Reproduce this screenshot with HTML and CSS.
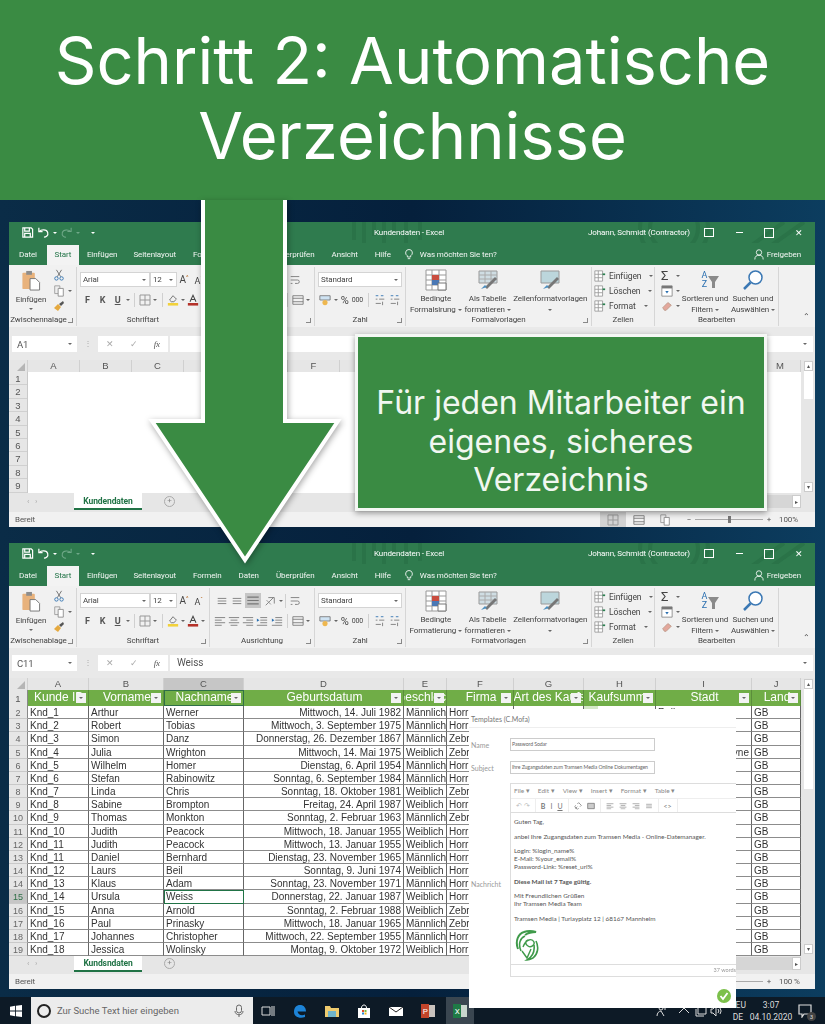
FILE: index.html
```html
<!DOCTYPE html>
<html lang="de">
<head>
  <meta charset="UTF-8" />
  <title>Schritt 2: Automatische Verzeichnisse</title>
  <link rel="stylesheet" href="styles.css">
</head>
<body>

  <svg class="defs" width="0" height="0">
    <symbol id="i-save" viewBox="0 0 14 14"><path d="M2 2h9l1.500 1.500V12H2zM4 2v3.500h5V2M4 12V8h6v4" fill="none" stroke="#fff" stroke-width="1.300"/></symbol>
    <symbol id="i-undo" viewBox="0 0 14 14"><path d="M2 2v4h4M2.500 6c2-2.500 8-2.500 9 1s-2 5-4 5" fill="none" stroke="#fff" stroke-width="1.300"/></symbol>
    <symbol id="i-redo" viewBox="0 0 14 14"><path d="M12 2v4H8M11.500 6c-2-2.500-8-2.500-9 1s2 5 4 5" fill="none" stroke="#6fa888" stroke-width="1.100"/></symbol>
    <symbol id="i-paste" viewBox="0 0 20 22"><rect x="1" y="3" width="13" height="17" rx="1" fill="#e8b27c"/><rect x="5" y="1" width="6" height="4" fill="#8d8d8d"/><path d="M9 9h6l4 4v8H9z" fill="#fff" stroke="#777"/></symbol>
    <symbol id="i-cut" viewBox="0 0 12 14"><path d="M3 1l5 8M9 1L4 9" stroke="#666" fill="none"/><circle cx="3" cy="11" r="2" fill="none" stroke="#2a6fb0"/><circle cx="9" cy="11" r="2" fill="none" stroke="#2a6fb0"/></symbol>
    <symbol id="i-copy" viewBox="0 0 12 14"><path d="M1 1h6v9H1z" fill="#eee" stroke="#999"/><path d="M5 4h6v9H5z" fill="#fff" stroke="#888"/></symbol>
    <symbol id="i-brush" viewBox="0 0 12 12"><path d="M6 4l4-3 1 2-3 3z" fill="#555"/><path d="M1 8l4-4 3 3-3 4z" fill="#e5a93f"/></symbol>
    <symbol id="i-border" viewBox="0 0 12 12"><path d="M1 1h10v10H1zM6 1v10M1 6h10" fill="none" stroke="#999"/></symbol>
    <symbol id="i-fill" viewBox="0 0 14 14"><path d="M7 2l4 4-3 3H5L3 7z" fill="none" stroke="#666"/><rect x="1" y="10.500" width="12" height="3" fill="#f2d13b"/></symbol>
    <symbol id="i-color" viewBox="0 0 14 14"><path d="M3.500 9L7 1.500 10.500 9M5 6.500h4" fill="none" stroke="#444" stroke-width="1.200"/><rect x="1" y="10.500" width="12" height="3" fill="#b5322a"/></symbol>
    <symbol id="i-lines" viewBox="0 0 14 12"><path d="M2 3h10M2 6h10M2 9h10" stroke="#777" fill="none"/></symbol>
    <symbol id="i-lines-left" viewBox="0 0 14 12"><path d="M1 2h12M1 5h8M1 8h12M1 11h8" stroke="#777" fill="none"/></symbol>
    <symbol id="i-lines-mid" viewBox="0 0 14 12"><path d="M1 2h12M3 5h8M1 8h12M3 11h8" stroke="#777" fill="none"/></symbol>
    <symbol id="i-lines-right" viewBox="0 0 14 12"><path d="M1 2h12M5 5h8M1 8h12M5 11h8" stroke="#777" fill="none"/></symbol>
    <symbol id="i-indent" viewBox="0 0 14 12"><path d="M5 2h8M5 5h8M5 8h8M1 11h12" stroke="#777" fill="none"/><path d="M1 3l3 2-3 2z" fill="#2a6fb0"/></symbol>
    <symbol id="i-orient" viewBox="0 0 14 14"><path d="M2 12L11 3M5 3h7v7" stroke="#777" fill="none"/><path d="M3 6l5 5" stroke="#888"/></symbol>
    <symbol id="i-wrap" viewBox="0 0 14 14"><path d="M2 3h10M2 7h8a2 2 0 010 4H7M2 11h2" stroke="#777" fill="none"/></symbol>
    <symbol id="i-merge" viewBox="0 0 14 12"><path d="M1 1h12v10H1zM1 4h12M1 8h12" stroke="#777" fill="none"/></symbol>
    <symbol id="i-money" viewBox="0 0 14 14"><path d="M1 2h12v5H1z" fill="#cfe3f3" stroke="#777"/><circle cx="7" cy="10" r="3" fill="#eeb74f"/></symbol>
    <symbol id="i-dec" viewBox="0 0 14 12"><path d="M2 5h2M6 5h6M2 10h6M10 8v4" stroke="#777" fill="none"/><path d="M2 1h3M8 1h3" stroke="#2a6fb0"/></symbol>
    <symbol id="i-cond" viewBox="0 0 22 22"><path d="M1 1h20v20H1zM1 6h20M1 11h20M1 16h20M7 1v20M14 1v20" fill="#fff" stroke="#999"/><path d="M7 6h7v5H7z" fill="#c94d3f"/><path d="M7 11h7v5H7z" fill="#4a78b5"/><path d="M13 14h8v7h-8z" fill="#fff" stroke="#777"/></symbol>
    <symbol id="i-table" viewBox="0 0 22 22"><path d="M2 2h18v12H2z" fill="#cfdde3" stroke="#999"/><path d="M2 6h18M2 10h18M8 2v12M14 2v12" stroke="#aaa"/><path d="M8 18l10-10 2 2-10 10z" fill="#777"/><path d="M4 20l4-4 2 2z" fill="#4c8fc0"/></symbol>
    <symbol id="i-styles" viewBox="0 0 22 22"><path d="M2 2h18v12H2z" fill="#bcd6dc" stroke="#999"/><path d="M8 18l10-10 2 2-10 10z" fill="#777"/><path d="M4 20l4-4 2 2z" fill="#4c8fc0"/></symbol>
    <symbol id="i-cells" viewBox="0 0 14 14"><path d="M1 1h9v12H1zM1 5h9M1 9h9M5 1v12" fill="#fff" stroke="#999"/><path d="M10 5h3" stroke="#2a7f4f" stroke-width="2"/></symbol>
    <symbol id="i-filld" viewBox="0 0 14 14"><path d="M1 1h12v12H1z" fill="#fff" stroke="#888"/><path d="M1 1h12v3H1z" fill="#777"/><path d="M5 7l2 3 2-3z" fill="#2a6fb0"/></symbol>
    <symbol id="i-erase" viewBox="0 0 14 14"><path d="M2 9l6-6 4 3-6 6H4z" fill="#e3a79c" stroke="#b98"/></symbol>
    <symbol id="i-sort" viewBox="0 0 22 22"><path d="M10 7h11l-4 6v6h-3v-6z" fill="#8a8a8a"/></symbol>
    <symbol id="i-search" viewBox="0 0 22 22"><circle cx="13.500" cy="8.500" r="6.500" fill="#fff" stroke="#3b78b4" stroke-width="1.500"/><path d="M8.500 13.500L2 20" stroke="#3b78b4" stroke-width="2.500"/></symbol>
    <symbol id="i-bulb" viewBox="0 0 12 14"><path d="M6 1a4 4 0 00-2 7.500V10h4V8.500A4 4 0 006 1zM4.500 12h3" fill="none" stroke="#fff"/></symbol>
    <symbol id="i-person" viewBox="0 0 12 14"><circle cx="6" cy="4.500" r="3.200" fill="none" stroke="#fff"/><path d="M1 13c0-4 2-5 5-5s5 1 5 5" fill="none" stroke="#fff"/></symbol>
    <symbol id="i-art" viewBox="0 0 470 43"><g fill="none" stroke="#2a7348" stroke-width="4"><path d="M10 0v18M20 0v26M30 0v14M40 0v22M50 0v12M62 0v30M76 0v18"/><circle cx="330" cy="6" r="34"/><circle cx="330" cy="6" r="24"/><path d="M380 43L440 0M400 43L460 0"/></g></symbol>
  </svg>

  <header class="banner">
    <h1>Schritt 2: Automatische<br>Verzeichnisse</h1>
  </header>

  <!-- Fenster 1 -->
  <section class="window window-top">
    <div class="titlebar">
      <svg class="title-art"><use href="#i-art"/></svg>
      <div class="qat">
        <svg class="ic"><use href="#i-save"/></svg>
        <svg class="ic"><use href="#i-undo"/></svg><i class="caret white"></i>
        <svg class="ic"><use href="#i-redo"/></svg><i class="caret dim"></i>
        <i class="caret white qat-more"></i>
      </div>
      <span class="doc-title">Kundendaten - Excel</span>
      <span class="user">Johann, Schmidt (Contractor)</span>
      <span class="winbtn box-sm"></span>
      <span class="winbtn min"></span>
      <span class="winbtn max"></span>
      <span class="winbtn close">✕</span>
    </div>
    <nav class="tabs">
      <span class="tab t-file">Datei</span>
      <span class="tab active">Start</span>
      <span class="tab t-ins">Einfügen</span>
      <span class="tab t-lay">Seitenlayout</span>
      <span class="tab t-for">Formeln</span>
      <span class="tab t-dat">Daten</span>
      <span class="tab t-rev">Überprüfen</span>
      <span class="tab t-vie">Ansicht</span>
      <span class="tab t-hlp">Hilfe</span>
      <svg class="tab-bulb"><use href="#i-bulb"/></svg>
      <span class="tab tell">Was möchten Sie ten?</span>
      <span class="share"><svg class="tab-bulb"><use href="#i-person"/></svg>Freigeben</span>
    </nav>
    <div class="ribbon">
      <div class="group g-clip">
        <div class="group-body">
          <div class="big paste"><svg class="ic-paste"><use href="#i-paste"/></svg><span>Einfügen</span><i class="caret"></i></div>
          <div class="clip-tools">
            <svg class="ic"><use href="#i-cut"/></svg>
            <span class="tool-row"><svg class="ic"><use href="#i-copy"/></svg><i class="caret"></i></span>
            <svg class="ic"><use href="#i-brush"/></svg>
          </div>
        </div>
        <div class="group-label">Zwischennalage<i class="launcher"></i></div>
      </div>
      <div class="group g-font">
        <div class="group-body col">
          <div class="tool-row">
            <span class="select s-font">Arial<i class="caret"></i></span><span class="select s-size">12<i class="caret"></i></span>
            <span class="grow-a">A<sup>^</sup></span><span class="grow-a small">A<sup>ˇ</sup></span>
          </div>
          <div class="tool-row tools-2">
            <b class="fmt">F</b><b class="fmt">K</b><b class="fmt u">U</b><i class="caret"></i><i class="sep"></i>
            <svg class="ic"><use href="#i-border"/></svg><i class="caret"></i><i class="sep"></i>
            <svg class="ic"><use href="#i-fill"/></svg><i class="caret"></i>
            <svg class="ic"><use href="#i-color"/></svg><i class="caret"></i>
          </div>
        </div>
        <div class="group-label">Schriftart<i class="launcher"></i></div>
      </div>
      <div class="group g-align">
        <div class="group-body col">
          <div class="tool-row align-1">
            <svg class="ic"><use href="#i-lines"/></svg><svg class="ic"><use href="#i-lines"/></svg><svg class="ic pressed"><use href="#i-lines"/></svg>
            <svg class="ic"><use href="#i-orient"/></svg><i class="caret"></i><i class="sep"></i>
            <svg class="ic"><use href="#i-wrap"/></svg>
          </div>
          <div class="tool-row tools-2">
            <svg class="ic"><use href="#i-lines-left"/></svg><svg class="ic"><use href="#i-lines-mid"/></svg><svg class="ic"><use href="#i-lines-right"/></svg>
            <svg class="ic"><use href="#i-indent"/></svg><svg class="ic"><use href="#i-indent"/></svg><i class="sep"></i>
            <svg class="ic"><use href="#i-merge"/></svg><i class="caret"></i>
          </div>
        </div>
        <div class="group-label">Ausrichtung<i class="launcher"></i></div>
      </div>
      <div class="group g-num">
        <div class="group-body col">
          <div class="tool-row"><span class="select s-num">Standard<i class="caret"></i></span></div>
          <div class="tool-row tools-2">
            <svg class="ic"><use href="#i-money"/></svg><i class="caret"></i>
            <span class="pct">%</span><span class="thou">000</span><i class="sep"></i>
            <svg class="ic"><use href="#i-dec"/></svg><svg class="ic"><use href="#i-dec"/></svg>
          </div>
        </div>
        <div class="group-label">Zahl<i class="launcher"></i></div>
      </div>
      <div class="group g-styles">
        <div class="group-body">
          <div class="big b-cond"><svg class="ic-big"><use href="#i-cond"/></svg><span>Bedingte<br>Formalsirung <i class="caret"></i></span></div>
          <div class="big b-table"><svg class="ic-big"><use href="#i-table"/></svg><span>Als Tabelle<br>formatieren <i class="caret"></i></span></div>
          <div class="big b-cell"><svg class="ic-big"><use href="#i-styles"/></svg><span>Zellenformatvorlagen<br><i class="caret"></i></span></div>
        </div>
        <div class="group-label">Formalvorlagen<i class="launcher"></i></div>
      </div>
      <div class="group g-cells">
        <div class="group-body col cell-rows">
          <span class="cell-tool"><svg class="ic"><use href="#i-cells"/></svg>Einfügen <i class="caret"></i></span>
          <span class="cell-tool"><svg class="ic"><use href="#i-cells"/></svg>Löschen <i class="caret"></i></span>
          <span class="cell-tool"><svg class="ic"><use href="#i-cells"/></svg>Format <i class="caret"></i></span>
        </div>
        <div class="group-label">Zellen</div>
      </div>
      <div class="group g-edit">
        <div class="group-body">
          <div class="edit-tools">
            <span class="tool-row"><span class="sigma">Σ</span><i class="caret"></i></span>
            <span class="tool-row"><svg class="ic"><use href="#i-filld"/></svg><i class="caret"></i></span>
            <span class="tool-row"><svg class="ic"><use href="#i-erase"/></svg><i class="caret"></i></span>
          </div>
          <div class="big b-sort"><span class="sort-ic"><em>A<br>Z</em><svg class="ic-big"><use href="#i-sort"/></svg></span><span>Sortleren und<br>Filtern <i class="caret"></i></span></div>
          <div class="big b-find"><svg class="ic-big"><use href="#i-search"/></svg><span>Suchen und<br>Auswählen <i class="caret"></i></span></div>
        </div>
        <div class="group-label">Bearbeiten</div>
      </div>
      <div class="collapse">⌃</div>
    </div>
    <div class="formula">
      <span class="namebox">A1<i class="caret"></i></span>
      <span class="dots">⋮</span>
      <span class="fx-btns"><em>✕</em><em>✓</em><em class="fx">fx</em></span>
      <span class="fx-input"></span>
      <i class="caret fx-caret"></i>
    </div>
    <div class="sheet">
      <div class="sheet-main">
        <div class="colhead blank-cols">
          <span class="corner"></span><span>A</span><span>B</span><span>C</span><span>D</span><span>E</span><span>F</span><span></span><span>M</span>
        </div>
        <div class="blank-rows">
          <div class="rownums"><span>1</span><span>2</span><span>3</span><span>4</span><span>5</span><span>6</span><span>7</span><span>8</span><span>9</span></div>
          <div class="blank-area"></div>
        </div>
      </div>
      <div class="vscroll"><i class="sb-btn">▴</i><i class="sb-thumb"></i><i class="sb-btn end">▾</i></div>
    </div>
    <div class="sheettabs">
      <span class="nav-arrows">‹ &nbsp; ›</span>
      <span class="sheettab">Kundendaten</span>
      <span class="addsheet">+</span>
      <span class="hscroll"><i class="sb-btn">▸</i></span>
    </div>
    <div class="statusbar">
      <span>Bereit</span>
      <span class="views"><i class="view on"><svg class="ic"><use href="#i-border"/></svg></i><i class="view"><svg class="ic"><use href="#i-merge"/></svg></i><i class="view"><svg class="ic"><use href="#i-copy"/></svg></i></span>
      <span class="zoom-minus">−</span><span class="slider"><i></i></span><span class="zoom-plus">+</span><span class="zoom-val">100%</span>
    </div>
  </section>

  <!-- Fenster 2 -->
  <section class="window window-bottom">
    <div class="titlebar">
      <svg class="title-art"><use href="#i-art"/></svg>
      <div class="qat">
        <svg class="ic"><use href="#i-save"/></svg>
        <svg class="ic"><use href="#i-undo"/></svg><i class="caret white"></i>
        <svg class="ic"><use href="#i-redo"/></svg><i class="caret dim"></i>
        <i class="caret white qat-more"></i>
      </div>
      <span class="doc-title">Kundendaten - Excel</span>
      <span class="user">Johann, Schmidt (Contractor)</span>
      <span class="winbtn box-sm"></span>
      <span class="winbtn min"></span>
      <span class="winbtn max"></span>
      <span class="winbtn close">✕</span>
    </div>
    <nav class="tabs">
      <span class="tab t-file">Datei</span>
      <span class="tab active">Start</span>
      <span class="tab t-ins">Einfügen</span>
      <span class="tab t-lay">Seitenlayout</span>
      <span class="tab t-for">Formeln</span>
      <span class="tab t-dat">Daten</span>
      <span class="tab t-rev">Überprüfen</span>
      <span class="tab t-vie">Ansicht</span>
      <span class="tab t-hlp">Hilfe</span>
      <svg class="tab-bulb"><use href="#i-bulb"/></svg>
      <span class="tab tell">Was möchten Sie ten?</span>
      <span class="share"><svg class="tab-bulb"><use href="#i-person"/></svg>Freigeben</span>
    </nav>
    <div class="ribbon">
      <div class="group g-clip">
        <div class="group-body">
          <div class="big paste"><svg class="ic-paste"><use href="#i-paste"/></svg><span>Einfügen</span><i class="caret"></i></div>
          <div class="clip-tools">
            <svg class="ic"><use href="#i-cut"/></svg>
            <span class="tool-row"><svg class="ic"><use href="#i-copy"/></svg><i class="caret"></i></span>
            <svg class="ic"><use href="#i-brush"/></svg>
          </div>
        </div>
        <div class="group-label">Zwischenablage<i class="launcher"></i></div>
      </div>
      <div class="group g-font">
        <div class="group-body col">
          <div class="tool-row">
            <span class="select s-font">Arial<i class="caret"></i></span><span class="select s-size">12<i class="caret"></i></span>
            <span class="grow-a">A<sup>^</sup></span><span class="grow-a small">A<sup>ˇ</sup></span>
          </div>
          <div class="tool-row tools-2">
            <b class="fmt">F</b><b class="fmt">K</b><b class="fmt u">U</b><i class="caret"></i><i class="sep"></i>
            <svg class="ic"><use href="#i-border"/></svg><i class="caret"></i><i class="sep"></i>
            <svg class="ic"><use href="#i-fill"/></svg><i class="caret"></i>
            <svg class="ic"><use href="#i-color"/></svg><i class="caret"></i>
          </div>
        </div>
        <div class="group-label">Schriftart<i class="launcher"></i></div>
      </div>
      <div class="group g-align">
        <div class="group-body col">
          <div class="tool-row align-1">
            <svg class="ic"><use href="#i-lines"/></svg><svg class="ic"><use href="#i-lines"/></svg><svg class="ic pressed"><use href="#i-lines"/></svg>
            <svg class="ic"><use href="#i-orient"/></svg><i class="caret"></i><i class="sep"></i>
            <svg class="ic"><use href="#i-wrap"/></svg>
          </div>
          <div class="tool-row tools-2">
            <svg class="ic"><use href="#i-lines-left"/></svg><svg class="ic"><use href="#i-lines-mid"/></svg><svg class="ic"><use href="#i-lines-right"/></svg>
            <svg class="ic"><use href="#i-indent"/></svg><svg class="ic"><use href="#i-indent"/></svg><i class="sep"></i>
            <svg class="ic"><use href="#i-merge"/></svg><i class="caret"></i>
          </div>
        </div>
        <div class="group-label">Ausrichtung<i class="launcher"></i></div>
      </div>
      <div class="group g-num">
        <div class="group-body col">
          <div class="tool-row"><span class="select s-num">Standard<i class="caret"></i></span></div>
          <div class="tool-row tools-2">
            <svg class="ic"><use href="#i-money"/></svg><i class="caret"></i>
            <span class="pct">%</span><span class="thou">000</span><i class="sep"></i>
            <svg class="ic"><use href="#i-dec"/></svg><svg class="ic"><use href="#i-dec"/></svg>
          </div>
        </div>
        <div class="group-label">Zahl<i class="launcher"></i></div>
      </div>
      <div class="group g-styles">
        <div class="group-body">
          <div class="big b-cond"><svg class="ic-big"><use href="#i-cond"/></svg><span>Bedingte<br>Formatierung <i class="caret"></i></span></div>
          <div class="big b-table"><svg class="ic-big"><use href="#i-table"/></svg><span>Als Tabelle<br>formatieren <i class="caret"></i></span></div>
          <div class="big b-cell"><svg class="ic-big"><use href="#i-styles"/></svg><span>Zellenformatvorlagen<br><i class="caret"></i></span></div>
        </div>
        <div class="group-label">Formatvorlagen<i class="launcher"></i></div>
      </div>
      <div class="group g-cells">
        <div class="group-body col cell-rows">
          <span class="cell-tool"><svg class="ic"><use href="#i-cells"/></svg>Einfügen <i class="caret"></i></span>
          <span class="cell-tool"><svg class="ic"><use href="#i-cells"/></svg>Löschen <i class="caret"></i></span>
          <span class="cell-tool"><svg class="ic"><use href="#i-cells"/></svg>Format <i class="caret"></i></span>
        </div>
        <div class="group-label">Zellen</div>
      </div>
      <div class="group g-edit">
        <div class="group-body">
          <div class="edit-tools">
            <span class="tool-row"><span class="sigma">Σ</span><i class="caret"></i></span>
            <span class="tool-row"><svg class="ic"><use href="#i-filld"/></svg><i class="caret"></i></span>
            <span class="tool-row"><svg class="ic"><use href="#i-erase"/></svg><i class="caret"></i></span>
          </div>
          <div class="big b-sort"><span class="sort-ic"><em>A<br>Z</em><svg class="ic-big"><use href="#i-sort"/></svg></span><span>Sortieren und<br>Filtern <i class="caret"></i></span></div>
          <div class="big b-find"><svg class="ic-big"><use href="#i-search"/></svg><span>Suchen und<br>Auswählen <i class="caret"></i></span></div>
        </div>
        <div class="group-label">Bearbeiten</div>
      </div>
      <div class="collapse">⌃</div>
    </div>
    <div class="formula">
      <span class="namebox">C11<i class="caret"></i></span>
      <span class="dots">⋮</span>
      <span class="fx-btns"><em>✕</em><em>✓</em><em class="fx">fx</em></span>
      <span class="fx-input">Weiss</span>
      <i class="caret fx-caret"></i>
    </div>
    <div class="sheet">
      <div class="sheet-main">
        <div class="colhead data-cols">
          <span class="corner"></span><span>A</span><span>B</span><span class="sel">C</span><span>D</span><span>E</span><span>F</span><span>G</span><span>H</span><span>I</span><span>J</span>
        </div>
        <div class="row data-cols head">
          <div class="rh">1</div><div>Kunde ID<i></i></div><div>Vorname<i></i></div><div class="sel-head">Nachname<i></i></div><div>Geburtsdatum<i></i></div><div>Geschlecht<i></i></div><div>Firma<i></i></div><div>Art des Kaufs<i></i></div><div>Kaufsumme<i></i></div><div>Stadt<i></i></div><div>Land<i></i></div>
        </div>
        <div class="row data-cols"><div class="rh">2</div><div>Knd_1</div><div>Arthur</div><div>Werner</div><div class="r">Mittwoch, 14. Juli 1982</div><div>Männlich</div><div>Horrmann</div><div></div><div class="mark"></div><div>Rolinson</div><div>GB</div></div>
        <div class="row data-cols"><div class="rh">3</div><div>Knd_2</div><div>Robert</div><div>Tobias</div><div class="r">Mittwoch, 3. September 1975</div><div>Männlich</div><div>Horrmann</div><div></div><div></div><div></div><div>GB</div></div>
        <div class="row data-cols"><div class="rh">4</div><div>Knd_3</div><div>Simon</div><div>Danz</div><div class="r">Donnerstag, 26. Dezember 1867</div><div>Männlich</div><div>Zebra</div><div></div><div></div><div></div><div>GB</div></div>
        <div class="row data-cols"><div class="rh">5</div><div>Knd_4</div><div>Julia</div><div>Wrighton</div><div class="r">Mittwoch, 14. Mai 1975</div><div>Weiblich</div><div>Zebra</div><div></div><div></div><div class="r">Newcastle upon Tyne</div><div>GB</div></div>
        <div class="row data-cols"><div class="rh">6</div><div>Knd_5</div><div>Wilhelm</div><div>Homer</div><div class="r">Dienstag, 6. April 1954</div><div>Männlich</div><div>Horrmann</div><div></div><div></div><div></div><div>GB</div></div>
        <div class="row data-cols"><div class="rh">7</div><div>Knd_6</div><div>Stefan</div><div>Rabinowitz</div><div class="r">Sonntag, 6. September 1984</div><div>Männlich</div><div>Horrmann</div><div></div><div></div><div></div><div>GB</div></div>
        <div class="row data-cols"><div class="rh">8</div><div>Knd_7</div><div>Linda</div><div>Chris</div><div class="r">Sonntag, 18. Oktober 1981</div><div>Weiblich</div><div>Zebra</div><div></div><div></div><div></div><div>GB</div></div>
        <div class="row data-cols"><div class="rh">9</div><div>Knd_8</div><div>Sabine</div><div>Brompton</div><div class="r">Freitag, 24. April 1987</div><div>Weiblich</div><div>Horrmann</div><div></div><div></div><div></div><div>GB</div></div>
        <div class="row data-cols"><div class="rh">10</div><div>Knd_9</div><div>Thomas</div><div>Monkton</div><div class="r">Sonntag, 2. Februar 1963</div><div>Männlich</div><div>Zebra</div><div></div><div></div><div></div><div>GB</div></div>
        <div class="row data-cols"><div class="rh">11</div><div>Knd_10</div><div>Judith</div><div>Peacock</div><div class="r">Mittwoch, 18. Januar 1955</div><div>Weiblich</div><div>Horrmann</div><div></div><div></div><div></div><div>GB</div></div>
        <div class="row data-cols"><div class="rh">12</div><div>Knd_11</div><div>Judith</div><div>Peacock</div><div class="r">Mittwoch, 13. Januar 1955</div><div>Weiblich</div><div>Horrmann</div><div></div><div></div><div></div><div>GB</div></div>
        <div class="row data-cols"><div class="rh">13</div><div>Knd_11</div><div>Daniel</div><div>Bernhard</div><div class="r">Dienstag, 23. November 1965</div><div>Männlich</div><div>Horrmann</div><div></div><div></div><div></div><div>GB</div></div>
        <div class="row data-cols"><div class="rh">14</div><div>Knd_12</div><div>Laurs</div><div>Beil</div><div class="r">Sonntag, 9. Juni 1974</div><div>Weiblich</div><div>Horrmann</div><div></div><div></div><div></div><div>GB</div></div>
        <div class="row data-cols"><div class="rh">14</div><div>Knd_13</div><div>Klaus</div><div>Adam</div><div class="r">Sonntag, 23. November 1971</div><div>Männlich</div><div>Horrmann</div><div></div><div></div><div></div><div>GB</div></div>
        <div class="row data-cols"><div class="rh sel">15</div><div>Knd_14</div><div>Ursula</div><div class="active-cell">Weiss</div><div class="r">Donnerstag, 22. Januar 1987</div><div>Weiblich</div><div>Horrmann</div><div></div><div></div><div></div><div>GB</div></div>
        <div class="row data-cols"><div class="rh">16</div><div>Knd_15</div><div>Anna</div><div>Arnold</div><div class="r">Sonntag, 2. Februar 1988</div><div>Weiblich</div><div>Zebra</div><div></div><div></div><div></div><div>GB</div></div>
        <div class="row data-cols"><div class="rh">17</div><div>Knd_16</div><div>Paul</div><div>Prinasky</div><div class="r">Mittwoch, 18. Januar 1965</div><div>Männlich</div><div>Zebra</div><div></div><div></div><div></div><div>GB</div></div>
        <div class="row data-cols"><div class="rh">18</div><div>Knd_17</div><div>Johannes</div><div>Christopher</div><div class="r">Mittwoch, 22. September 1955</div><div>Männlich</div><div>Horrmann</div><div></div><div></div><div></div><div>GB</div></div>
        <div class="row data-cols"><div class="rh">19</div><div>Knd_18</div><div>Jessica</div><div>Wolinsky</div><div class="r">Montag, 9. Oktober 1972</div><div>Weiblich</div><div>Horrmann</div><div></div><div></div><div></div><div>GB</div></div>
      </div>
      <div class="vscroll"><i class="sb-btn">▴</i><i class="sb-thumb"></i><i class="sb-btn end">▾</i></div>
    </div>
    <div class="sheettabs">
      <span class="nav-arrows">‹ &nbsp; ›</span>
      <span class="sheettab">Kundsndaten</span>
      <span class="addsheet">+</span>
      <span class="hscroll"><i class="sb-btn">▸</i></span>
    </div>
    <div class="statusbar">
      <span>Bereit</span>
      <span class="views"></span>
      <span class="zoom-minus"></span><span class="slider"><i></i></span><span class="zoom-plus">+</span><span class="zoom-val">100 %</span>
    </div>
  </section>

  <footer class="taskbar">
    <svg class="task-start" viewBox="0 0 14 14"><path d="M0 2l6-1v5.500H0zM7 1l7-1v6.500H7zM0 7.500h6V13l-6-1zM7 7.500h7V14l-7-1z" fill="#fff"/></svg>
    <div class="task-search">
      <i class="cortana"></i>
      <span>Zur Suche Text hier eingeben</span>
      <svg class="mic" viewBox="0 0 10 14"><rect x="2.500" y="1" width="5" height="8" rx="2.500" fill="none" stroke="#666"/><path d="M1 7c0 5 8 5 8 0M5 11v2" fill="none" stroke="#666"/></svg>
    </div>
    <div class="task-icons">
      <svg viewBox="0 0 14 14"><path d="M1 3h8v8H1zM11 2v10M13 2v10" fill="none" stroke="#ddd"/></svg>
      <svg viewBox="0 0 14 14"><path d="M1 8C1 3 4 .5 8 1c3 .5 5 3 5 6.500H4.500C5 11 9 12 12 10.500V13C7 15 1 13 1 8z" fill="#1d84d8"/></svg>
      <svg viewBox="0 0 14 14"><path d="M0 2h5l1 2h8v9H0z" fill="#eecb6e"/><path d="M3 7h8v6H3z" fill="#6fb3c9"/></svg>
      <svg viewBox="0 0 14 14"><path d="M1 4h12v10H1z" fill="#fff"/><path d="M4.500 4c0-4 5-4 5 0" fill="none" stroke="#fff"/><path d="M5 6h2v2H5z" fill="#e0492b"/><path d="M7.500 6h2v2h-2z" fill="#7cb83b"/><path d="M5 8.500h2v2H5z" fill="#2a8ad4"/><path d="M7.500 8.500h2v2h-2z" fill="#f3b71f"/></svg>
      <svg viewBox="0 0 14 14"><path d="M0 3h14v9H0z" fill="#fff"/><path d="M0 3l7 5 7-5" fill="none" stroke="#222"/></svg>
      <svg viewBox="0 0 14 14"><path d="M1 1h13v12H1z" fill="#c9c2bd"/><path d="M0 0h8v14H0z" fill="#c2442a"/><text x="1.800" y="10" font-size="8" font-family="Roboto" fill="#fff">P</text></svg>
      <span class="task-excel"><svg viewBox="0 0 14 14"><path d="M1 1h13v12H1z" fill="#c9d6cd"/><path d="M0 0h8v14H0z" fill="#1f7a46"/><text x="1.800" y="10" font-size="8" font-family="Roboto" fill="#fff">X</text></svg></span>
    </div>
    <div class="tray">
      <svg viewBox="0 0 12 12"><circle cx="5" cy="3" r="2" fill="none" stroke="#ddd"/><path d="M1 11c0-3 2-5 4-5l3 5M9 2v3" fill="none" stroke="#ddd"/></svg>
      <svg viewBox="0 0 12 12"><path d="M1 8l5-5 5 5" fill="none" stroke="#ddd"/></svg>
      <svg viewBox="0 0 12 12"><path d="M3 1h8v8H3zM1 4v7h8" fill="none" stroke="#ddd"/></svg>
      <svg viewBox="0 0 12 12"><path d="M1 4h2l3-3v10L3 8H1zM8 4a3 3 0 010 4M10 3a5 5 0 010 6" fill="none" stroke="#ddd"/></svg>
      <span class="lang">DEU<br>DE</span>
      <span class="clock">3:07<br>04.10.2020</span>
      <span class="notify"><svg viewBox="0 0 14 14"><path d="M1 1h12v9H6l-2 3v-3H1z" fill="none" stroke="#ddd" stroke-width="1.200"/></svg><b>3</b></span>
    </div>
  </footer>

  <!-- Elemente über den Fenstern -->
  <svg class="arrow" viewBox="0 0 825 400" width="825" height="400">
    <polygon points="203,-6 285,-6 285,221 338,221 245,360 152,221 203,221" fill="#3a8b43" stroke="#fff" stroke-width="4"/>
  </svg>

  <div class="callout">Für jeden Mitarbeiter ein<br>eigenes, sicheres<br>Verzeichnis</div>

  <div class="mail">
    <div class="mail-title">Templates (C.Mofa)</div>
    <div class="mail-form">
      <label>Name</label><span class="mail-input">Password Sodar</span>
      <label>Subject</label><span class="mail-input">Ihre Zugangsdaten zum Tramsen Media Online Dokumentagen</span>
      <label class="msg-label">Nachricht</label>
      <div class="editor">
        <div class="ed-menu"><span>File ▾</span><span>Edit ▾</span><span>View ▾</span><span>Insert ▾</span><span>Format ▾</span><span>Table ▾</span></div>
        <div class="ed-tools">
          <span class="ed-set dim">↶ ↷</span>
          <span class="ed-set"><b>B</b><em>I</em><u>U</u></span>
          <span class="ed-set"><svg viewBox="0 0 12 12"><path d="M2 10l3-3M5 3l2-2 4 4-2 2M7 9l-2 2-4-4 2-2" fill="none" stroke="#666"/></svg><svg viewBox="0 0 12 12"><path d="M1 2h10v8H1z" fill="#ccc" stroke="#666"/></svg></span>
          <span class="ed-set"><svg viewBox="0 0 14 12"><use href="#i-lines-left"/></svg><svg viewBox="0 0 14 12"><use href="#i-lines-mid"/></svg><svg viewBox="0 0 14 12"><use href="#i-lines-right"/></svg><svg viewBox="0 0 14 12"><use href="#i-lines"/></svg></span>
          <span class="ed-set">&lt;&gt;</span>
        </div>
        <div class="ed-body">
          <p>Guten Tag,</p>
          <p>anbei Ihre Zugangsdaten zum Tramsen Media - Online-Datemanager.</p>
          <p>Login: %login_name%<br>E-Mail: %your_email%<br>Password-Link: %reset_url%</p>
          <p><strong>Diese Mail ist 7 Tage gültig.</strong></p>
          <p>Mit Freundlichen Grüßen<br>Ihr Tramsen Media Team</p>
          <p>Tramsen Media | Turlayplatz 12 | 68167 Mannheim</p>
          <svg class="mail-logo" viewBox="0 0 24 32"><g fill="none" stroke="#3f9a4a"><path d="M3 20C0 12 3 5 9 3c5-2 9-1 12 0-4 0-8 1-11 3" stroke-width="2"/><path d="M6 22c-3-7-1-13 4-15M21 12c3 6 2 13-3 17-2 1-5 2-6 2 5-3 8-8 7-15" stroke-width="1.600"/><path d="M8 18c3-8 9-9 11-5 1 3-3 6-6 4s-3-5 0-6M7 22l5 7 4-9" stroke-width="1.400"/></g></svg>
        </div>
        <div class="ed-status">37 words</div>
      </div>
    </div>
    <div class="mail-foot">
      <svg class="mail-ok" viewBox="0 0 14 14"><circle cx="7" cy="7" r="7" fill="#7cc04b"/><path d="M3.500 7l2.500 3L10.500 4" fill="none" stroke="#fff" stroke-width="1.800"/></svg>
    </div>
  </div>

</body>
</html>
```

FILE: styles.css
```css
* {
  margin: 0;
  padding: 0;
  box-sizing: border-box;
}

html, body {
  width: 825px;
  height: 1024px;
  overflow: hidden;
}

body {
  position: relative;
  font-family: Roboto, sans-serif;
  background: linear-gradient(90deg, #0a2c47 0%, #05203c 50%, #0c3d5f 100%);
}

.defs {
  position: absolute;
}

i, em {
  font-style: normal;
}

/* Banner */
.banner {
  height: 200px;
  background: #3a8b43;
  text-align: center;
  padding-top: 23px;
}

.banner h1 {
  font-family: Inter, sans-serif;
  font-weight: 400;
  font-size: 65px;
  line-height: 75px;
  color: #fff;
}

/* Excel */
.window {
  width: 806px;
  margin-left: 9px;
  display: flex;
  flex-direction: column;
  background: #e9e9e9;
  color: #444;
  font-size: 8px;
  letter-spacing: -0.1px;
  overflow: hidden;
  filter: blur(0.3px);
}

.window-top {
  margin-top: 22px;
  height: 305px;
}

.window-bottom {
  margin-top: 16px;
  height: 446px;
}

.titlebar {
  position: relative;
  height: 21px;
  flex: none;
  display: flex;
  align-items: center;
  background: #2f7b4e;
  color: #fff;
}

.title-art {
  position: absolute;
  left: 335px;
  top: 0;
  width: 470px;
  height: 43px;
}

.qat {
  display: flex;
  align-items: center;
  gap: 3px;
  width: 330px;
  padding-left: 12px;
}

.qat .ic {
  width: 13px;
  height: 13px;
}

.qat-more {
  margin-left: 8px;
}

.doc-title {
  position: relative;
  width: 249px;
  padding-left: 35px;
}

.user {
  position: relative;
  width: 106px;
  white-space: nowrap;
}

.winbtn {
  position: relative;
  width: 30px;
  height: 12px;
  display: flex;
  justify-content: center;
  align-items: center;
  font-size: 9px;
}

.box-sm::before {
  content: "";
  width: 8px;
  height: 7px;
  border: 1px solid #fff;
}

.min::before {
  content: "";
  width: 7px;
  border-top: 1px solid #fff;
}

.max::before {
  content: "";
  width: 8px;
  height: 8px;
  border: 1px solid #fff;
}

.tabs {
  position: relative;
  height: 22px;
  flex: none;
  display: flex;
  align-items: center;
  background: #2f7b4e;
  color: #f2f6f3;
  padding-left: 10px;
}

.tab {
  white-space: nowrap;
}

.tab.active {
  align-self: flex-end;
  width: 32px;
  height: 20px;
  line-height: 20px;
  margin-left: 10px;
  text-align: center;
  background: #f3f3f3;
  color: #217346;
}

.t-ins { margin-left: 8px; }
.t-lay { margin-left: 16px; }
.t-for { margin-left: 17px; }
.t-dat { margin-left: 17px; }
.t-rev { margin-left: 17px; }
.t-vie { margin-left: 17px; }
.t-hlp { margin-left: 17px; }

.tab-bulb {
  width: 10px;
  height: 13px;
  margin: 0 6px 0 13px;
  flex: none;
}

.share {
  display: flex;
  align-items: center;
  margin-left: auto;
  margin-right: 14px;
}

.share .tab-bulb {
  margin: 0 3px 0 0;
}

.ribbon {
  position: relative;
  height: 62px;
  flex: none;
  display: flex;
  background: #f1f1f1;
  padding-top: 2px;
}

.group {
  position: relative;
  display: flex;
  flex-direction: column;
  border-right: 1px solid #d6d6d6;
  margin-bottom: 1px;
  flex: none;
}

.group-body {
  flex: 1;
  display: flex;
  min-height: 0;
}

.group-body.col {
  flex-direction: column;
  padding: 5px 3px 0;
  gap: 5px;
}

.group-label {
  position: relative;
  height: 12px;
  line-height: 12px;
  text-align: center;
  white-space: nowrap;
}

.g-clip .group-label {
  padding-right: 8px;
}

.launcher {
  position: absolute;
  right: 3px;
  top: 4px;
  width: 5px;
  height: 5px;
  border-right: 1px solid #888;
  border-bottom: 1px solid #888;
}

.g-clip { width: 68px; }
.g-font { width: 133px; }
.g-align { width: 105px; }
.g-num { width: 91px; }
.g-styles { width: 186px; }
.g-cells { width: 63px; }
.g-edit { width: 124px; }

.ic {
  width: 12px;
  height: 12px;
  flex: none;
}

.caret {
  display: inline-block;
  width: 0;
  height: 0;
  flex: none;
  border-left: 2px solid transparent;
  border-right: 2px solid transparent;
  border-top: 2px solid #666;
  vertical-align: middle;
}

.caret.white { border-top-color: #fff; }
.caret.dim { border-top-color: #6fa888; }

.sep {
  width: 1px;
  height: 14px;
  background: #d0d0d0;
  flex: none;
}

.tool-row {
  display: flex;
  align-items: center;
  height: 15px;
}

.tools-2 {
  height: 16px;
  justify-content: space-between;
  padding: 0 1px 0 1px;
}

.align-1 {
  justify-content: space-between;
  padding: 0 10px 0 3px;
}

.big {
  display: flex;
  flex-direction: column;
  align-items: center;
  text-align: center;
  white-space: nowrap;
  line-height: 11px;
  padding-top: 2px;
  gap: 2px;
}

.paste {
  width: 44px;
  padding-top: 3px;
  gap: 3px;
}

.ic-paste {
  width: 20px;
  height: 21px;
}

.clip-tools {
  display: flex;
  flex-direction: column;
  gap: 2px;
  padding-top: 2px;
}

.clip-tools .tool-row .caret {
  margin-left: 3px;
}

.select {
  position: relative;
  display: flex;
  align-items: center;
  justify-content: space-between;
  height: 15px;
  background: #fff;
  border: 1px solid #d4d4d4;
  padding: 0 3px 0 2px;
}

.s-font { width: 71px; }
.s-size { width: 27px; }
.s-num { width: 85px; }

.grow-a {
  width: 15px;
  text-align: center;
  font-size: 10px;
}

.grow-a sup {
  font-size: 6px;
  color: #b5651d;
}

.grow-a.small {
  font-size: 9px;
}

.fmt {
  width: 13px;
  text-align: center;
  font-size: 9px;
  color: #555;
}

.fmt.u {
  text-decoration: underline;
}

.tools-2 .sep {
  margin: 0 2px;
}

.pressed {
  background: #c6c6c6;
  width: 16px;
  height: 15px;
}

.pct {
  font-size: 11px;
}

.thou {
  font-size: 7px;
}

.ic-big {
  width: 22px;
  height: 22px;
  flex: none;
}

.b-cond { width: 60px; }
.b-table { width: 44px; }
.b-cell { width: 82px; }

.group-body.cell-rows {
  gap: 0;
  padding: 1px 0 0 2px;
}

.cell-tool {
  display: flex;
  align-items: center;
  gap: 3px;
  height: 15.500px;
  font-size: 8.500px;
}

.cell-tool .caret {
  margin-left: 5px;
}

.edit-tools {
  display: flex;
  flex-direction: column;
  width: 26px;
  padding: 1px 0 0 6px;
}

.edit-tools .caret {
  margin-left: 3px;
}

.sigma {
  width: 12px;
  font-size: 13px;
  line-height: 15px;
  color: #444;
}

.b-sort { width: 48px; }
.b-find { width: 48px; }

.sort-ic {
  display: flex;
  align-items: center;
  height: 22px;
  padding-left: 12px;
}

.sort-ic em {
  font-size: 9px;
  line-height: 9px;
  color: #2a6fb0;
}

.sort-ic .ic-big {
  margin-left: -9px;
}

.collapse {
  flex: 1;
  text-align: right;
  padding: 45px 5px 0 0;
  font-size: 8px;
}

.formula {
  flex: none;
  display: flex;
  align-items: flex-start;
  height: 33px;
  padding: 9px 3px 0 3px;
  background: #e9e9e9;
}

.window-bottom .formula {
  height: 30px;
  padding-top: 7px;
}

.namebox {
  display: flex;
  align-items: center;
  justify-content: space-between;
  width: 65px;
  height: 16px;
  padding: 0 5px;
  background: #fff;
  font-size: 9.500px;
  color: #555;
}

.dots {
  width: 21px;
  text-align: center;
  color: #aaa;
  line-height: 16px;
}

.fx-btns {
  display: flex;
  justify-content: space-around;
  align-items: center;
  width: 70px;
  height: 16px;
  background: #fff;
  color: #aaa;
  font-size: 9px;
  margin-right: 2px;
}

.fx-btns .fx {
  color: #555;
  font-family: "Liberation Serif", serif;
  font-style: italic;
}

.fx-input {
  flex: 1;
  height: 16px;
  line-height: 16px;
  background: #fff;
  padding-left: 7px;
  font-size: 10px;
  color: #555;
}

.fx-caret {
  position: relative;
  margin: 7px 5px 0 -10px;
}

.sheet {
  flex: 1;
  min-height: 0;
  display: flex;
}

.sheet-main {
  width: 792px;
  flex: none;
  background: #fff;
  font-family: "Liberation Sans", sans-serif;
  letter-spacing: 0;
}

.colhead {
  display: grid;
  height: 12px;
  background: #e6e6e6;
  font-size: 9.500px;
  line-height: 12px;
  color: #555;
  text-align: center;
}

.colhead span {
  border-right: 1px solid #d0d0d0;
}

.colhead .sel {
  background: #c6c6c6;
}

.corner {
  position: relative;
}

.corner::after {
  content: "";
  position: absolute;
  right: 2px;
  bottom: 1px;
  border-left: 8px solid transparent;
  border-bottom: 8px solid #b5b5b5;
}

.blank-cols {
  grid-template-columns: 19px repeat(6, 52px) 1fr 41px;
}

.data-cols {
  display: grid;
  grid-template-columns: 19px 61px 75px 80px 160px 43px 67px 70px 72px 96px 49px;
}

.blank-rows {
  display: flex;
}

.rownums {
  width: 19px;
  flex: none;
  background: #e6e6e6;
  border-right: 1px solid #c9c9c9;
  color: #555;
  font-size: 9.500px;
  text-align: center;
}

.rownums span {
  display: block;
  height: 13.400px;
  line-height: 13.400px;
  border-bottom: 1px solid #d0d0d0;
}

.row {
  height: 13.180px;
  font-size: 10px;
  line-height: 12px;
  color: #333;
}

.row > div {
  position: relative;
  display: flex;
  justify-content: flex-start;
  overflow: hidden;
  white-space: nowrap;
  padding: 1px 0 0 2px;
  border-right: 1px solid #666;
  border-bottom: 1px solid #8c8c8c;
}

.row > .r {
  justify-content: flex-end;
  padding: 1px 2px 0 0;
}

.row > .rh {
  justify-content: center;
  padding: 1px 0 0;
  background: #e6e6e6;
  color: #666;
  font-size: 9px;
  border-right-color: #888;
  border-bottom-color: #c9c9c9;
}

.row > .rh.sel {
  background: #c6c6c6;
  color: #2f6f47;
}

.row .active-cell {
  border: 1px solid #217346;
  padding: 0 0 0 1px;
}

.mark {
  background: linear-gradient(90deg, #d5e8c9 20%, transparent 20%);
}

.head {
  height: 16px;
  font-size: 12px;
  line-height: 15px;
  color: #fff;
}

.head > div {
  justify-content: center;
  padding: 0 0 0 2px;
  background: #70ad47;
  border-right: 1px solid #5b8d3b;
  border-bottom: none;
}

.head > div.rh {
  color: #555;
  font-size: 9.500px;
  line-height: 16px;
}

.head > div.sel-head {
  outline: 1px solid #2f6f47;
  outline-offset: -1px;
}

.head i {
  position: absolute;
  right: 2px;
  top: 3px;
  width: 10px;
  height: 10px;
  background: #f3f3f3;
}

.head i::after {
  content: "";
  position: absolute;
  left: 3px;
  top: 4px;
  border-left: 2px solid transparent;
  border-right: 2px solid transparent;
  border-top: 2px solid #666;
}

.vscroll {
  flex: 1;
  display: flex;
  flex-direction: column;
  align-items: center;
  background: #e6e6e6;
  padding-top: 1px;
  font-size: 6px;
}

.sb-btn {
  display: block;
  width: 9px;
  height: 10px;
  background: #fff;
  border: 1px solid #ccc;
  line-height: 8px;
  text-align: center;
  color: #555;
  flex: none;
}

.sb-btn.end {
  margin-top: auto;
  margin-bottom: 1px;
}

.sb-thumb {
  width: 9px;
  height: 28px;
  background: #fff;
}

.window-bottom .sb-thumb {
  height: 100px;
}

.sheettabs {
  flex: none;
  display: flex;
  height: 19px;
  background: #e6e6e6;
  align-items: flex-start;
}

.nav-arrows {
  width: 65px;
  padding-left: 18px;
  color: #aaa;
  line-height: 17px;
}

.sheettab {
  width: 68px;
  height: 17px;
  line-height: 17px;
  background: #fff;
  border-bottom: 2px solid #217346;
  color: #217346;
  font-weight: 700;
  text-align: center;
  font-size: 8.500px;
}

.addsheet {
  width: 11px;
  height: 11px;
  margin: 3px 0 0 22px;
  border: 1px solid #aaa;
  border-radius: 50%;
  color: #888;
  line-height: 8px;
  text-align: center;
}

.hscroll {
  margin-left: auto;
  display: flex;
  justify-content: flex-end;
  width: 300px;
  height: 13px;
  margin-top: 2px;
  margin-right: 14px;
  background: #d6d6d6;
  font-size: 6px;
}

.hscroll .sb-btn {
  height: 13px;
  line-height: 11px;
}

.statusbar {
  flex: none;
  display: flex;
  align-items: center;
  height: 15px;
  padding: 0 12px 0 6px;
  background: #f1f1f1;
  color: #555;
}

.views {
  display: flex;
  margin-left: auto;
}

.view {
  display: flex;
  align-items: center;
  justify-content: center;
  width: 26px;
  height: 15px;
}

.view.on {
  background: #d2d2d2;
}

.zoom-minus {
  width: 12px;
  margin-left: 5px;
  text-align: center;
}

.slider {
  position: relative;
  width: 68px;
  height: 1px;
  background: #aaa;
}

.slider i {
  position: absolute;
  left: 33px;
  top: -3px;
  width: 3px;
  height: 7px;
  background: #777;
}

.zoom-plus {
  width: 12px;
  text-align: center;
}

.zoom-val {
  width: 24px;
  margin-left: 4px;
  white-space: nowrap;
}

/* Taskleiste */
.taskbar {
  position: absolute;
  left: 0;
  right: 0;
  bottom: 0;
  height: 27px;
  display: flex;
  align-items: center;
  background: #0d1a26;
  color: #ddd;
}

.task-start {
  width: 12px;
  height: 12px;
  margin: 0 10px;
  flex: none;
}

.task-search {
  display: flex;
  align-items: center;
  width: 222px;
  height: 27px;
  margin-left: -1px;
  padding: 0 9px 0 6px;
  background: #ececec;
  color: #666;
  font-size: 9.500px;
  flex: none;
}

.cortana {
  width: 14px;
  height: 14px;
  border: 2px solid #222;
  border-radius: 50%;
  margin-right: 6px;
  flex: none;
}

.mic {
  width: 10px;
  height: 14px;
  margin-left: auto;
}

.task-icons {
  display: flex;
  align-items: center;
  height: 27px;
  margin-left: 8px;
  gap: 18px;
}

.task-icons svg {
  width: 14px;
  height: 14px;
}

.task-excel {
  display: flex;
  align-items: center;
  justify-content: center;
  width: 28px;
  height: 27px;
  margin-left: -7px;
  background: #3a4650;
}

.tray {
  position: absolute;
  right: 13px;
  top: 0;
  height: 27px;
  display: flex;
  align-items: center;
}

.tray svg {
  width: 12px;
  height: 12px;
  flex: none;
}

.tray svg:nth-child(2) { margin-left: 10px; }
.tray svg:nth-child(3) { margin-left: 5px; }
.tray svg:nth-child(4) { margin-left: 3px; }

.lang {
  width: 18px;
  margin-left: 7px;
  text-align: center;
  font-size: 8.500px;
  line-height: 12px;
}

.clock {
  width: 50px;
  margin-left: -1px;
  text-align: center;
  font-size: 8.500px;
  line-height: 12px;
}

.notify {
  position: relative;
  margin-left: 2px;
}

.notify svg {
  width: 14px;
  height: 14px;
  display: block;
}

.notify b {
  position: absolute;
  right: -4px;
  bottom: -3px;
  width: 9px;
  height: 9px;
  background: #444;
  border-radius: 50%;
  font-size: 6px;
  font-weight: 400;
  line-height: 9px;
  text-align: center;
}

/* Overlays */
.arrow {
  position: absolute;
  left: 0;
  top: 200px;
  filter: drop-shadow(1px 2px 3px rgba(0,0,0,0.35));
}

.callout {
  position: absolute;
  left: 355px;
  top: 334px;
  width: 412px;
  height: 177px;
  padding-top: 47px;
  background: #3a8b43;
  border: 3.500px solid #f4f7f4;
  box-shadow: 0 2px 6px rgba(0,0,0,0.4);
  color: #f1f7f1;
  font-family: Inter, sans-serif;
  font-size: 32px;
  line-height: 38.500px;
  text-align: center;
  white-space: nowrap;
}

.mail {
  position: absolute;
  left: 469px;
  top: 709px;
  width: 267px;
  height: 299px;
  display: flex;
  flex-direction: column;
  background: #fff;
  color: #555;
  font-family: Lato, sans-serif;
  font-size: 7px;
  filter: blur(0.3px);
}

.mail-title {
  flex: none;
  height: 19px;
  padding: 6px 0 0 2px;
  border-bottom: 1px solid #eee;
  color: #777;
}

.mail-form {
  display: grid;
  grid-template-columns: 41px 1fr;
  grid-template-rows: 13px 13px 1fr;
  row-gap: 10px;
  padding-top: 10px;
  height: 249px;
  flex: none;
  color: #999;
}

.mail-form label {
  padding: 3px 0 0 2px;
}

.mail-form .msg-label {
  padding-top: 96px;
}

.mail-input {
  width: 145px;
  border: 1px solid #ccc;
  padding: 2px 1px;
  color: #666;
  font-size: 5.200px;
  letter-spacing: -0.1px;
  white-space: nowrap;
  overflow: hidden;
}

.editor {
  display: flex;
  flex-direction: column;
  border: 1px solid #ddd;
  border-right: none;
  margin-top: -1px;
}

.ed-menu {
  display: flex;
  gap: 8px;
  height: 14px;
  align-items: center;
  padding-left: 3px;
  color: #888;
  font-size: 6.500px;
  flex: none;
}

.ed-tools {
  display: flex;
  align-items: center;
  height: 15px;
  border-top: 1px solid #eee;
  border-bottom: 1px solid #ddd;
  color: #777;
  font-size: 7px;
  flex: none;
}

.ed-set {
  display: flex;
  align-items: center;
  gap: 5px;
  height: 13px;
  padding: 0 5px;
  border-right: 1px solid #eee;
}

.ed-set.dim {
  color: #bbb;
  gap: 0;
}

.ed-set svg {
  width: 8px;
  height: 8px;
}

.ed-body {
  flex: 1;
  padding: 5px 3px 0;
  color: #555;
  font-size: 6.400px;
  line-height: 8px;
}

.ed-body p {
  margin-bottom: 6.500px;
}

.mail-logo {
  display: block;
  width: 24px;
  height: 32px;
  margin-left: 1px;
}

.ed-status {
  flex: none;
  height: 12px;
  border-top: 1px solid #ddd;
  text-align: right;
  font-size: 5.500px;
  line-height: 11px;
  color: #999;
}

.mail-foot {
  flex: 1;
  display: flex;
  justify-content: flex-end;
  align-items: flex-start;
  padding: 12px 5px 0 0;
}

.mail-ok {
  width: 14px;
  height: 14px;
}
```
